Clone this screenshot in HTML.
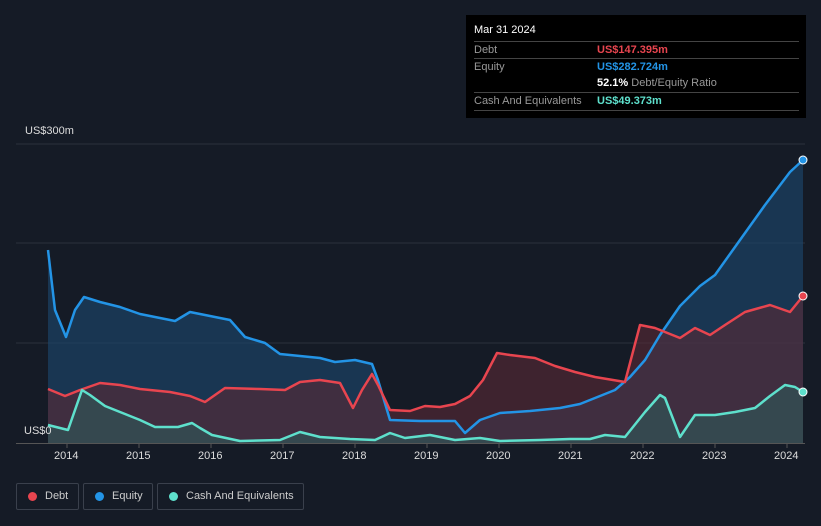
<!DOCTYPE html><html><head><style>
html,body{margin:0;padding:0}
body{background:#151b26;font-family:"Liberation Sans",sans-serif;width:821px;height:526px;overflow:hidden;position:relative}
.tt{position:absolute;left:466px;top:15px;width:340px;height:103px;background:#000;color:#999;font-size:11px}
.row{position:absolute;left:8px;width:325px;border-top:1px solid #444;height:17px;line-height:17px}
.v{position:absolute;left:123px;font-weight:bold}
.lg{position:absolute;top:483px;height:27px;border:1px solid #3a404c;border-radius:2px;color:#ccc;font-size:11px;line-height:25px;box-sizing:border-box;white-space:nowrap}
.lg i{position:absolute;left:11px;top:8px;width:9px;height:9px;border-radius:50%}
.lg span{position:absolute;left:28px}
.ax{position:absolute;top:450px;color:#ddd;font-size:11px}
</style></head><body>
<svg width="821" height="526" style="position:absolute;left:0;top:0">
<g stroke="#2a303c" stroke-width="1"><line x1="16" y1="144" x2="805" y2="144"/><line x1="16" y1="243" x2="805" y2="243"/><line x1="16" y1="343" x2="805" y2="343"/><line x1="16" y1="443.5" x2="805" y2="443.5" stroke="#555"/></g>
<polygon fill="#1d4a70" opacity="0.6" points="48,443 48,250 55,310 66,337 75,310 84,297 100,302 120,307 140,314 175,321 190,312 205,315 230,320 245,337 265,343 280,354 320,358 335,362 355,360 372,364 378,380 390,420 420,421 455,421 465,433 480,420 500,413 530,411 560,408 580,404 595,398 615,390 630,377 645,360 660,335 680,306 700,286 715,275 740,240 765,205 790,172 803,160 803,443"/>
<polygon fill="#5a2a36" opacity="0.6" points="48,443 48,389 65,396 80,390 100,383 120,385 140,389 170,392 190,396 205,402 215,395 225,388 260,389 285,390 300,382 320,380 340,383 353,408 362,390 372,374 378,385 390,410 410,411 425,406 440,407 455,404 470,396 483,380 497,353 510,355 535,358 555,366 575,372 595,377 625,382 640,325 655,328 680,338 695,328 710,335 725,325 745,312 770,305 790,312 803,296 803,443"/>
<polygon fill="#2e5a5a" opacity="0.6" points="48,443 48,425 68,430 82,390 90,395 105,406 120,412 140,420 155,427 178,427 192,423 200,428 212,435 240,441 280,440 290,436 300,432 320,437 350,439 375,440 390,433 405,438 430,435 455,440 480,438 500,441 540,440 570,439 590,439 605,435 625,437 645,412 660,395 665,398 680,437 695,415 715,415 735,412 755,408 770,396 785,385 795,387 803,392 803,443"/>
<g fill="none" stroke-width="2.5" stroke-linejoin="round">
<polyline stroke="#2394e6" points="48,250 55,310 66,337 75,310 84,297 100,302 120,307 140,314 175,321 190,312 205,315 230,320 245,337 265,343 280,354 320,358 335,362 355,360 372,364 378,380 390,420 420,421 455,421 465,433 480,420 500,413 530,411 560,408 580,404 595,398 615,390 630,377 645,360 660,335 680,306 700,286 715,275 740,240 765,205 790,172 803,160"/>
<polyline stroke="#e8454f" points="48,389 65,396 80,390 100,383 120,385 140,389 170,392 190,396 205,402 215,395 225,388 260,389 285,390 300,382 320,380 340,383 353,408 362,390 372,374 378,385 390,410 410,411 425,406 440,407 455,404 470,396 483,380 497,353 510,355 535,358 555,366 575,372 595,377 625,382 640,325 655,328 680,338 695,328 710,335 725,325 745,312 770,305 790,312 803,296"/>
<polyline stroke="#5ee0cc" points="48,425 68,430 82,390 90,395 105,406 120,412 140,420 155,427 178,427 192,423 200,428 212,435 240,441 280,440 290,436 300,432 320,437 350,439 375,440 390,433 405,438 430,435 455,440 480,438 500,441 540,440 570,439 590,439 605,435 625,437 645,412 660,395 665,398 680,437 695,415 715,415 735,412 755,408 770,396 785,385 795,387 803,392"/>
</g>
<circle cx="803" cy="160" r="4" fill="#2394e6" stroke="#fff" stroke-width="1"/>
<circle cx="803" cy="296" r="4" fill="#e8454f" stroke="#fff" stroke-width="1"/>
<circle cx="803" cy="392" r="4" fill="#5ee0cc" stroke="#fff" stroke-width="1"/>
<g stroke="#555"><line x1="67" y1="443" x2="67" y2="448"/><line x1="139" y1="443" x2="139" y2="448"/><line x1="211" y1="443" x2="211" y2="448"/><line x1="283" y1="443" x2="283" y2="448"/><line x1="355" y1="443" x2="355" y2="448"/><line x1="427" y1="443" x2="427" y2="448"/><line x1="499" y1="443" x2="499" y2="448"/><line x1="571" y1="443" x2="571" y2="448"/><line x1="643" y1="443" x2="643" y2="448"/><line x1="715" y1="443" x2="715" y2="448"/><line x1="787" y1="443" x2="787" y2="448"/></g>
</svg>
<div style="position:absolute;left:25px;top:125px;color:#ddd;font-size:11px">US$300m</div>
<div style="position:absolute;left:24px;top:425px;color:#ddd;font-size:11px">US$0</div>
<div class="ax" style="left:54px">2014</div><div class="ax" style="left:126px">2015</div><div class="ax" style="left:198px">2016</div><div class="ax" style="left:270px">2017</div><div class="ax" style="left:342px">2018</div><div class="ax" style="left:414px">2019</div><div class="ax" style="left:486px">2020</div><div class="ax" style="left:558px">2021</div><div class="ax" style="left:630px">2022</div><div class="ax" style="left:702px">2023</div><div class="ax" style="left:774px">2024</div>
<div class="tt">
<div style="position:absolute;left:8px;top:9px;color:#fff;font-size:11px">Mar 31 2024</div>
<div class="row" style="top:26px">Debt<span class="v" style="color:#e8454f">US$147.395m</span></div>
<div class="row" style="top:43px">Equity<span class="v" style="color:#2394e6">US$282.724m</span></div>
<div style="position:absolute;left:131px;top:60px;line-height:17px;"><b style="color:#fff">52.1%</b> Debt/Equity Ratio</div>
<div class="row" style="top:77px">Cash And Equivalents<span class="v" style="color:#5ee0cc">US$49.373m</span></div>
<div class="row" style="top:95px;height:0"></div>
</div>
<div class="lg" style="left:16px;width:63px"><i style="background:#e8454f"></i><span>Debt</span></div>
<div class="lg" style="left:83px;width:70px"><i style="background:#2394e6"></i><span>Equity</span></div>
<div class="lg" style="left:157px;width:147px"><i style="background:#5ee0cc"></i><span>Cash And Equivalents</span></div>
</body></html>
